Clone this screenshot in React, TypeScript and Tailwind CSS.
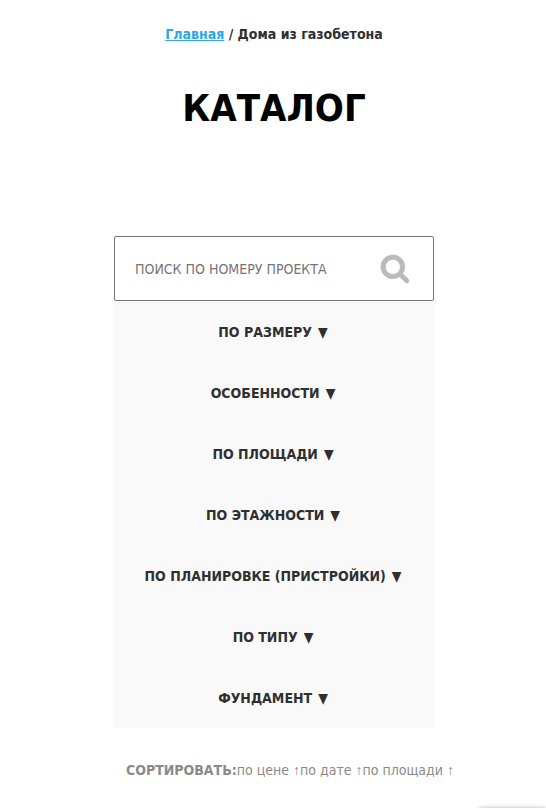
import React from 'react';

const filters = [
  'По размеру',
  'Особенности',
  'По площади',
  'По этажности',
  'По планировке (пристройки)',
  'По типу',
  'Фундамент',
];

const sortOptions = ['по цене', 'по дате', 'по площади'];

const SearchIcon: React.FC = () => (
  <svg viewBox="64 128 1664 1664" className="h-7 w-7" fill="currentColor" stroke="currentColor" strokeWidth="50" overflow="visible" aria-hidden="true">
    <path d="M1216 832q0-185-131.500-316.500T768 384 451.500 515.500 320 832t131.500 316.500T768 1280t316.500-131.500T1216 832zm512 832q0 52-38 90t-90 38q-54 0-90-38l-343-342q-179 124-399 124-143 0-273.500-55.500t-225-150-150-225T64 832t55.500-273.500 150-225 225-150T768 128t273.500 55.500 225 150 150 225T1472 832q0 220-124 399l343 343q37 37 37 90z" />
  </svg>
);

export default function App() {
  return (
    <div className="relative flex min-h-screen flex-col items-center overflow-hidden bg-white pt-6 pl-0.5 font-['DejaVu_Sans_Condensed','Noto_Sans',sans-serif] text-sm text-[#2f2f2f]">
      {/* Breadcrumbs */}
      <nav className="font-bold">
        <a href="#" className="text-[#2ea7e8] underline">Главная</a> / Дома из газобетона
      </nav>

      <h1 className="mt-10 text-[38px] leading-12 font-bold text-black uppercase">Каталог</h1>

      <main className="mt-26 w-full max-w-80">
        {/* Search */}
        <form className="flex h-[65px] items-center rounded-xs border border-[#767676] bg-white pr-6 pl-5">
          <input
            type="text"
            aria-label="Поиск по номеру проекта"
            placeholder="ПОИСК ПО НОМЕРУ ПРОЕКТА"
            className="h-full min-w-0 flex-1 outline-none placeholder:text-[#757575]"
          />
          <button type="button" aria-label="Найти" className="text-[#bababa]">
            <SearchIcon />
          </button>
        </form>

        {/* Filters */}
        <div className="flex flex-col bg-[#f9f9f9]">
          {filters.map((name) => (
            <button key={name} type="button" className="flex h-[61px] items-center justify-center gap-1.5 pr-0.5 font-bold">
              <span className="uppercase">{name}</span>
              <span>▼</span>
            </button>
          ))}
        </div>
      </main>

      {/* Sorting */}
      <div className="mt-8 flex pl-8 text-[#8a8a8a]">
        <span className="font-bold uppercase">Сортировать:</span>
        {sortOptions.map((option) => (
          <a key={option} href="#">
            {option} <span className="font-['Liberation_Sans',sans-serif]">↑</span>
          </a>
        ))}
      </div>

      {/* Top edge of the chat widget */}
      <div className="absolute right-0 -bottom-6 h-6 w-17 rounded-tl-sm bg-white shadow-[0_0_4px_rgba(0,0,0,0.3)]" />
    </div>
  );
}
